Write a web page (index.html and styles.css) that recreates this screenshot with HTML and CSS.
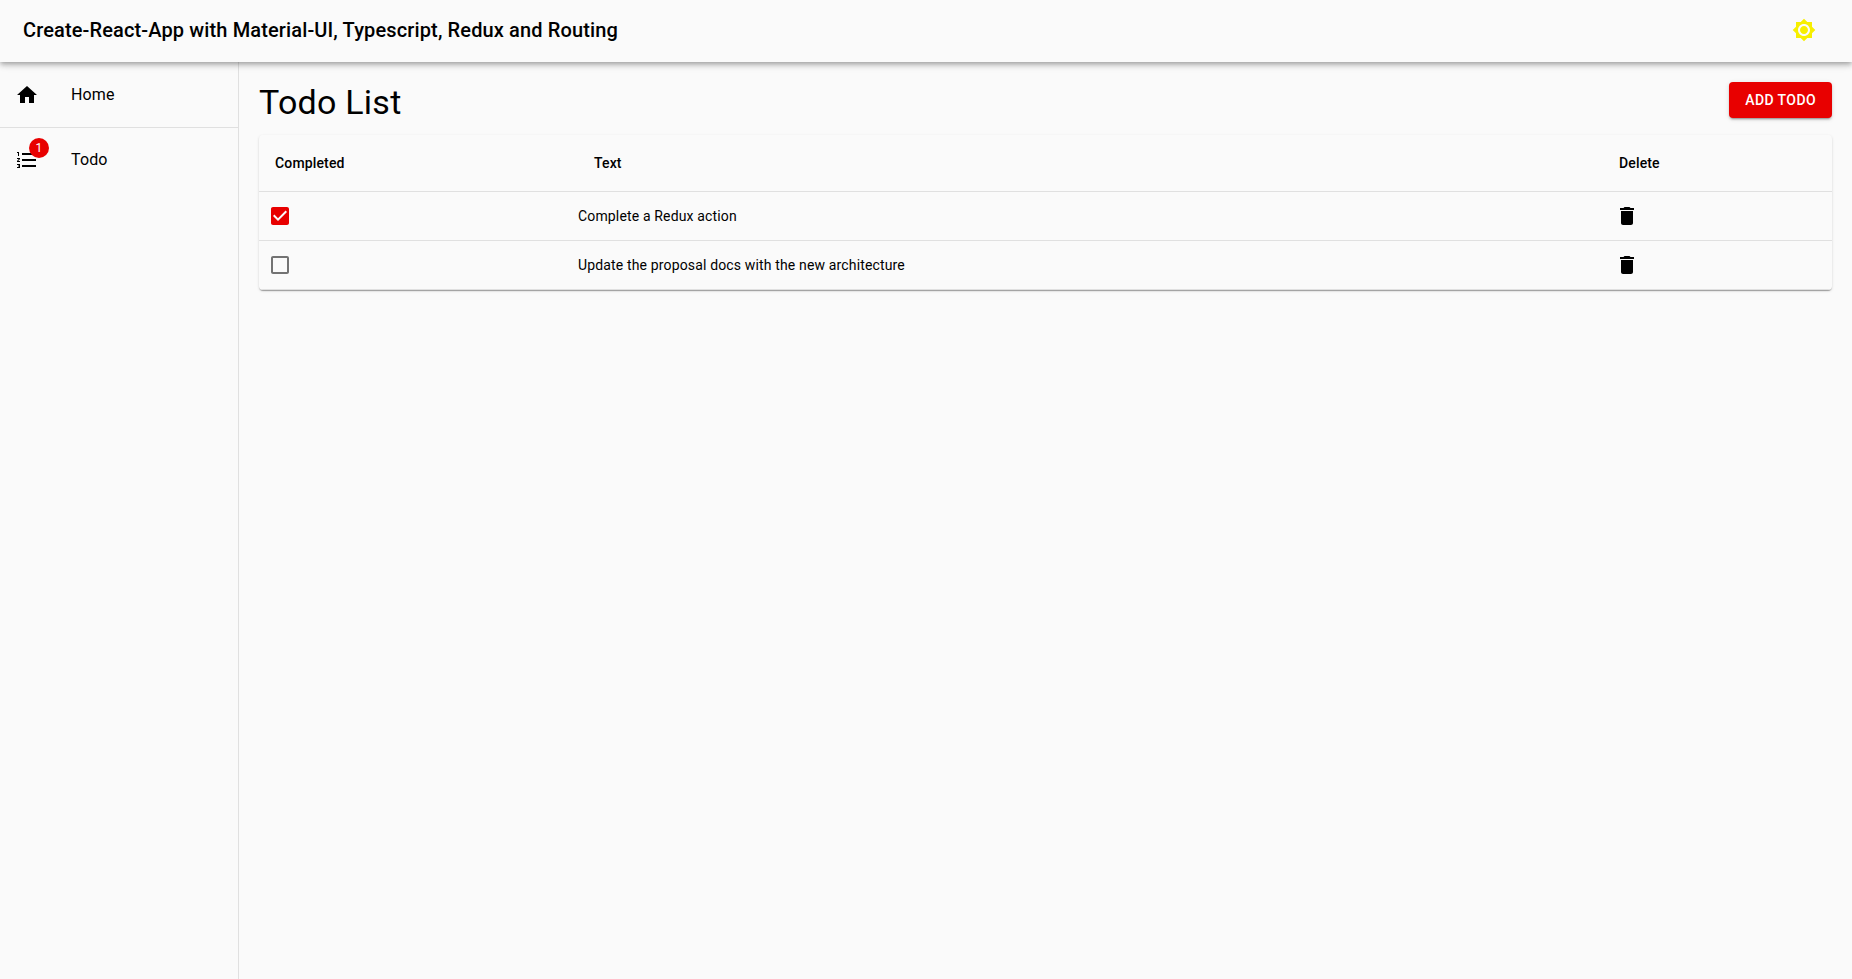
FILE: index.html
```html
<!DOCTYPE html>
<html lang="en">
<head>
<meta charset="utf-8">
<title>Todo List</title>
<link rel="stylesheet" href="styles.css">
</head>
<body>
<div class="app">
  <header class="appbar">
    <h1 class="app-title">Create-React-App with Material-UI, Typescript, Redux and Routing</h1>
    <button class="theme-btn" type="button" aria-label="Toggle theme">
      <svg class="icon icon-sun" viewBox="0 0 24 24"><path d="M20 8.69V4h-4.69L12 .69 8.69 4H4v4.69L.69 12 4 15.31V20h4.69L12 23.31 15.31 20H20v-4.69L23.31 12 20 8.69zM12 18c-3.31 0-6-2.69-6-6s2.69-6 6-6 6 2.69 6 6-2.69 6-6 6zm0-10c-2.21 0-4 1.79-4 4s1.79 4 4 4 4-1.79 4-4-1.79-4-4-4z"/></svg>
    </button>
  </header>
  <div class="body">
    <nav class="drawer">
      <a class="nav-item nav-item-divided">
        <span class="nav-icon"><svg class="icon" viewBox="0 0 24 24"><path d="M10 20v-6h4v6h5v-8h3L12 3 2 12h3v8z"/></svg></span>
        <span class="nav-label">Home</span>
      </a>
      <a class="nav-item">
        <span class="nav-icon">
          <svg class="icon" viewBox="0 0 24 24"><path d="M2 17h2v.5H3v1h1v.5H2v1h3v-4H2v1zm1-9h1V4H2v1h1v3zm-1 3h1.8L2 13.1v.9h3v-1H3.2L5 10.9V10H2v1zm5-6v2h14V5H7zm0 14h14v-2H7v2zm0-6h14v-2H7v2z"/></svg>
          <span class="badge">1</span>
        </span>
        <span class="nav-label">Todo</span>
      </a>
    </nav>
    <main class="main">
      <div class="page-head">
        <h2 class="page-title">Todo List</h2>
        <button class="add-btn" type="button">Add Todo</button>
      </div>
      <div class="paper">
        <table class="table">
          <colgroup>
            <col class="col-done">
            <col class="col-text">
            <col class="col-del">
          </colgroup>
          <thead>
            <tr>
              <th class="th-done">Completed</th>
              <th class="th-text">Text</th>
              <th class="th-del">Delete</th>
            </tr>
          </thead>
          <tbody>
            <tr>
              <td class="td-icon"><span class="icon-btn"><svg class="icon icon-red" viewBox="0 0 24 24"><path d="M19 3H5c-1.11 0-2 .9-2 2v14c0 1.1.89 2 2 2h14c1.11 0 2-.89 2-2V5c0-1.1-.89-2-2-2zm-9 14l-5-5 1.41-1.41L10 14.17l7.59-7.59L19 8l-9 9z"/></svg></span></td>
              <td class="td-text">Complete a Redux action</td>
              <td class="td-del"><span class="icon-btn icon-btn-wide"><svg class="icon" viewBox="0 0 24 24"><path d="M6 19c0 1.1.9 2 2 2h8c1.1 0 2-.9 2-2V7H6v12zM19 4h-3.5l-1-1h-5l-1 1H5v2h14V4z"/></svg></span></td>
            </tr>
            <tr>
              <td class="td-icon"><span class="icon-btn"><svg class="icon icon-grey" viewBox="0 0 24 24"><path d="M19 5v14H5V5h14m0-2H5c-1.1 0-2 .9-2 2v14c0 1.1.9 2 2 2h14c1.1 0 2-.9 2-2V5c0-1.1-.9-2-2-2z"/></svg></span></td>
              <td class="td-text">Update the proposal docs with the new architecture</td>
              <td class="td-del"><span class="icon-btn icon-btn-wide"><svg class="icon" viewBox="0 0 24 24"><path d="M6 19c0 1.1.9 2 2 2h8c1.1 0 2-.9 2-2V7H6v12zM19 4h-3.5l-1-1h-5l-1 1H5v2h14V4z"/></svg></span></td>
            </tr>
          </tbody>
        </table>
      </div>
    </main>
  </div>
</div>
</body>
</html>
```

FILE: styles.css
```css
* { box-sizing: border-box; }
html, body { height: 100%; }
body {
  margin: 0;
  background: #fafafa;
  color: #000;
  font-family: Roboto, "Liberation Sans", sans-serif;
  font-size: 14px;
  overflow: hidden;
}
.app { display: flex; flex-direction: column; height: 100%; }
.appbar {
  position: relative;
  z-index: 2;
  flex: none;
  height: 62px;
  display: flex;
  align-items: center;
  justify-content: space-between;
  padding: 0 24px 2px 23px;
  background: #fafafa;
  box-shadow: 0 2px 4px -1px rgba(0,0,0,.2), 0 4px 5px 0 rgba(0,0,0,.14), 0 1px 10px 0 rgba(0,0,0,.12);
}
.app-title { margin: 0; font-size: 20px; font-weight: 500; line-height: 1.6; letter-spacing: .0065em; }
.theme-btn {
  display: flex;
  padding: 12px;
  margin: 0;
  border: 0;
  background: none;
}
.icon { display: block; width: 24px; height: 24px; fill: currentColor; }
.icon-sun { color: #f7ef00; }
.icon-red { color: #e80000; }
.icon-grey { color: rgba(0,0,0,.54); }
.body { flex: 1; display: flex; min-height: 0; }
.drawer { flex: none; width: 239px; padding-top: 1px; border-right: 1px solid #e0e0e0; }
.nav-item { display: flex; align-items: center; height: 64px; padding: 0 15px; font-size: 16px; line-height: 1.5; letter-spacing: .00938em; }
.nav-item-divided { height: 65px; border-bottom: 1px solid #e0e0e0; }
.nav-icon { position: relative; flex: none; width: 56px; }
.badge {
  position: absolute;
  top: -10px;
  left: 14px;
  width: 20px;
  height: 20px;
  border-radius: 50%;
  background: #e80000;
  color: #fff;
  font-size: 12px;
  line-height: 20px;
  text-align: center;
}
.main { flex: 1; min-width: 0; padding: 20px 20px 0; }
.page-head { display: flex; justify-content: space-between; align-items: flex-start; height: 53px; }
.page-title { margin: 0; padding-top: 1px; font-size: 34px; font-weight: 400; line-height: 1.17; letter-spacing: .00735em; }
.add-btn {
  height: 36px;
  padding: 6px 16px;
  border: 0;
  border-radius: 4px;
  background: #e80000;
  color: #fff;
  font: 500 14px/1.75 Roboto, sans-serif;
  letter-spacing: .02857em;
  text-transform: uppercase;
  box-shadow: 0 3px 1px -2px rgba(0,0,0,.2), 0 2px 2px 0 rgba(0,0,0,.14), 0 1px 5px 0 rgba(0,0,0,.12);
}
.paper {
  border-radius: 4px;
  box-shadow: 0 2px 1px -1px rgba(0,0,0,.2), 0 1px 1px 0 rgba(0,0,0,.14), 0 1px 3px 0 rgba(0,0,0,.12);
  overflow: hidden;
}
.table { width: 100%; border-collapse: separate; border-spacing: 0; table-layout: fixed; letter-spacing: .01071em; line-height: 1.43; }
.col-done { width: 303px; }
.col-text { width: 1041px; }
th { height: 57px; padding: 0 16px; text-align: left; font-weight: 500; border-bottom: 1px solid #e0e0e0; }
.th-text { padding-left: 32px; }
td { height: 49px; padding: 0; border-bottom: 1px solid #e0e0e0; }
.td-text { padding: 0 16px; }
.icon-btn { display: block; width: 42px; padding: 9px; }
.icon-btn-wide { width: 48px; padding: 12px; }
```
